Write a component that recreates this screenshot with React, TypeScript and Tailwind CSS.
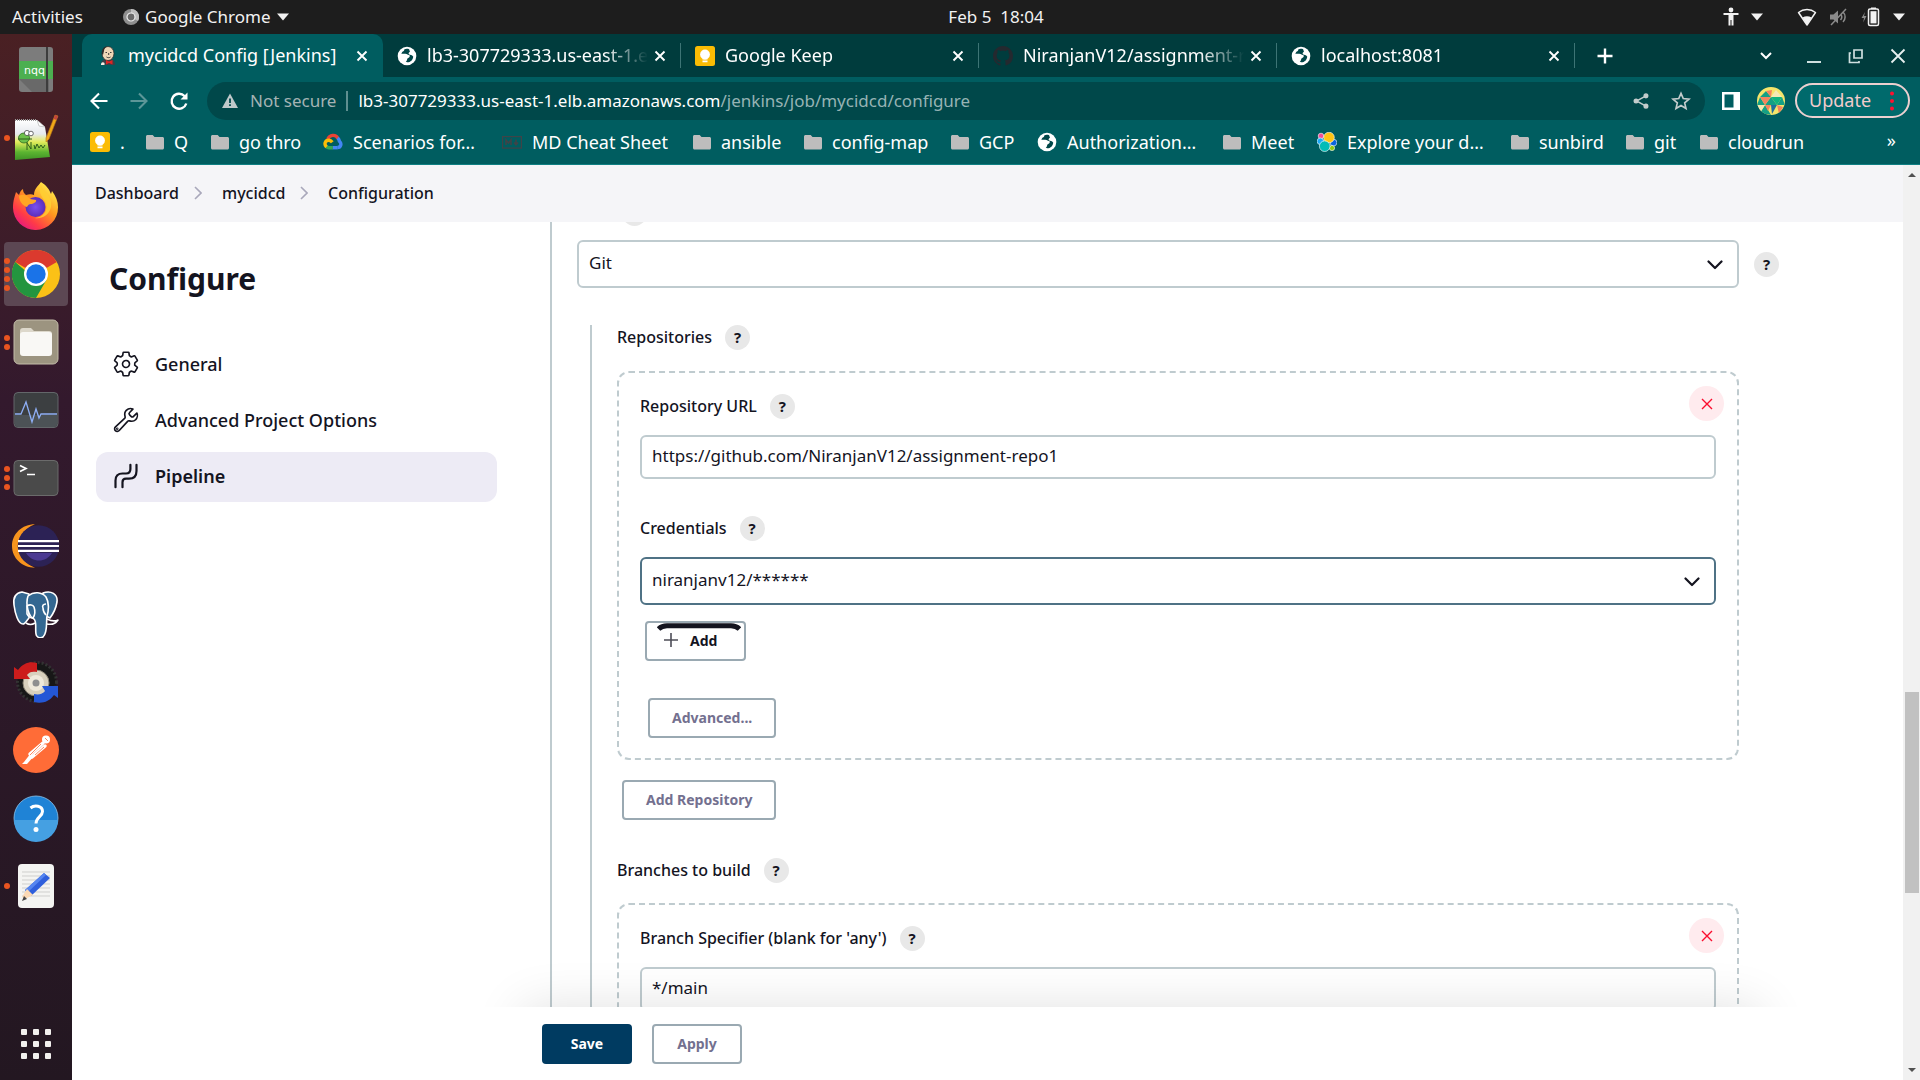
import type { ReactNode } from "react";

type P = { children?: ReactNode };

/* ---------- small browser icons ---------- */
const Globe = () => (
  <svg className="size-5 shrink-0" viewBox="0 0 20 20">
    <circle cx="10" cy="10" r="9.3" fill="#fff" />
    <path d="M12.2 3.2c-1.700-.6-3.600-.6-5 .2.200 1.100-.5 1.700-1.400 2.100-.9.400-.8 1.600-1.600 2.200l4.200.1c1.600.1 2 1 3.400 1.200 1.200.2 1.300 1.300.5 2.200-.9 1-2 .7-2.200 2.200-.1 1.200-.9 1.600-1.300 2.700 4 .9 7.300-2 7.400-5.700-.9-.5-1-1.500-2.200-1.500-1.400 0-2.500-.4-2.400-1.600.1-1 1.200-.9 1.300-1.800.1-.8-.8-1-.7-2.300z" fill="#004648" />
  </svg>
);
const Keep = () => (
  <svg className="size-5 shrink-0" viewBox="0 0 20 20">
    <rect width="20" height="20" rx="2.500" fill="#fbbc04" />
    <circle cx="10" cy="8.500" r="4.900" fill="#fff" />
    <path d="M7.500 11h5v2.600h-5zM7.500 14.600h5v1.700h-5z" fill="#fff" />
  </svg>
);
const Folder = () => (
  <svg className="h-5 w-[18px] shrink-0" viewBox="0 0 18 20">
    <path d="M1.500 3h5.200L8.500 5h8c.8 0 1.500.7 1.500 1.500v9.500c0 .8-.7 1.500-1.500 1.500h-15C.7 17.500 0 16.800 0 16V4.500C0 3.700.7 3 1.500 3z" fill="#bdbdbd" />
  </svg>
);
const Jenkins = () => (
  <svg className="size-5 shrink-0" viewBox="0 0 20 20">
    <path d="M3 19c0-4 2-5 4-6h6c3 1 4 3 4 6z" fill="#3c3f46" />
    <ellipse cx="10" cy="7.500" rx="6" ry="7" fill="#f0d6b7" stroke="#2b2b2b" strokeWidth=".8" />
    <path d="M4 8C3.500 3 6 .7 9 .6c-2 1.500-3 2.600-3 4.400L5 9z" fill="#2f2a28" />
    <path d="M7.500 6.500h1.500M12 6.500h1.500M8.500 11c1.500 1 3 .8 4 0M10.700 7v2" stroke="#2b2b2b" strokeWidth=".9" fill="none" />
    <path d="M8 14l3 1.500L14.500 14v4.500L11 17l-3 1.500z" fill="#e02424" />
    <path d="M3 17.500c1-1.500 2.500-1.500 3.500-.5V19H3z" fill="#f5efe6" />
  </svg>
);
const Github = () => (
  <svg className="size-5 shrink-0" viewBox="0 0 16 16">
    <path fill="#24292f" d="M8 0C3.580 0 0 3.580 0 8c0 3.540 2.290 6.530 5.470 7.590.4.070.55-.17.55-.38 0-.19-.01-.82-.01-1.490-2.010.37-2.530-.49-2.690-.94-.09-.23-.48-.94-.82-1.130-.28-.15-.68-.52-.01-.53.63-.01 1.080.58 1.230.82.72 1.210 1.870.87 2.330.66.07-.52.28-.87.51-1.070-1.780-.2-3.640-.89-3.640-3.950 0-.87.31-1.590.82-2.150-.08-.2-.36-1.020.08-2.120 0 0 .67-.21 2.200.82.64-.18 1.320-.27 2-.27s1.360.09 2 .27c1.530-1.040 2.200-.82 2.200-.82.44 1.100.16 1.920.08 2.120.51.56.82 1.270.82 2.150 0 3.070-1.870 3.750-3.650 3.950.29.25.54.73.54 1.480 0 1.070-.01 1.930-.01 2.200 0 .21.15.46.55.38A8.010 8.010 0 0 0 16 8c0-4.420-3.580-8-8-8z" />
  </svg>
);
const GCloud = () => (
  <svg className="size-5 shrink-0" viewBox="0 0 20 20" fill="none" strokeWidth="3.400">
    <path d="M4.800 7.200C6.500 2.500 12.800 2 15 6.500" stroke="#ea4335" />
    <path d="M14.600 6c1.500 1.200 1.600 2 1.800 3.200 2.600 2.200 1.600 6.300-2 6.300" stroke="#4285f4" />
    <path d="M14.600 15.700H9.500" stroke="#4285f4" />
    <path d="M9.800 15.700H6c-1.200 0-2-.4-2.800-1.200" stroke="#34a853" />
    <path d="M3.500 15C.5 12 2.500 8 6 8.200c1.500.1 2.500 1 3.300 2" stroke="#fbbc05" />
  </svg>
);
const Markdown = () => (
  <svg className="size-5 shrink-0" viewBox="0 0 20 20" fill="none" stroke="#3f4448" strokeWidth="1.200">
    <rect x=".6" y="4.600" width="18.800" height="11.500" />
    <path d="M4 13V8l2.500 3L9 8v5M14 7.500v5M12 10.500l2 2.300 2-2.300" strokeWidth="1.600" />
  </svg>
);
const Elastic = () => (
  <svg className="size-5 shrink-0" viewBox="0 0 20 20" stroke="#fff" strokeWidth=".6">
    <circle cx="4" cy="4" r="2.800" fill="#f04e98" />
    <circle cx="3.400" cy="9.300" r="3.300" fill="#1ba9f5" />
    <circle cx="16.500" cy="10.600" r="3.400" fill="#0b64dd" />
    <circle cx="15" cy="16" r="2.600" fill="#93c90e" />
    <circle cx="12" cy="5.500" r="5.300" fill="#fec514" />
    <circle cx="7.700" cy="14.200" r="5.300" fill="#02bcb7" />
  </svg>
);
const Cross = () => (
  <svg className="size-3" viewBox="0 0 12 12" stroke="currentColor" strokeWidth="1.900">
    <path d="M1.500 1.500l9 9M10.500 1.500l-9 9" />
  </svg>
);
const Caret = () => (
  <svg className="h-2 w-3 shrink-0" viewBox="0 0 12 8"><path d="M0 .5h12L6 7.500z" fill="#f2f2f2" /></svg>
);

/* ---------- desktop bar ---------- */
function TopBar() {
  return (
    <header className="grid h-[34px] shrink-0 grid-cols-[72px_1fr_auto_1fr] items-center bg-[#1d1d1d] text-[17px] text-[#f2f2f2]">
      <button className="justify-self-start pl-3 whitespace-nowrap">Activities</button>
      <button className="ml-[51px] flex items-center gap-1.5 justify-self-start">
        <svg className="size-4" viewBox="0 0 16 16">
          <circle cx="8" cy="8" r="8" fill="#8f8f8f" />
          <path d="M8 8V0a8 8 0 0 1 7 12z" fill="#bdbdbd" />
          <circle cx="8" cy="8" r="4" fill="#6a6a6a" stroke="#eee" strokeWidth="1.200" />
        </svg>
        Google Chrome
        <Caret />
      </button>
      <time className="whitespace-pre">Feb 5  18:04</time>
      <div className="flex items-center justify-end pr-[15px]">
        <svg className="size-5" viewBox="0 0 20 20" fill="#f2f2f2">
          <circle cx="10" cy="3" r="2.400" />
          <path d="M2.500 6h15v2h-5v10.500h-2V13h-1v5.500h-2V8h-5z" />
        </svg>
        <span className="ml-2.5 flex"><Caret /></span>
        <svg className="ml-[34px] size-5" viewBox="0 0 20 20">
          <path d="M1.500 5.500c5-4 12-4 17 0L10 18z" fill="none" stroke="#f2f2f2" strokeWidth="1.500" strokeLinejoin="round" />
          <path d="M5.500 10.500c2.800-1.800 6.200-1.800 9 0L10 18z" fill="#f2f2f2" />
        </svg>
        <svg className="ml-3 size-5" viewBox="0 0 20 20" fill="none" stroke="#8a8a8a" strokeWidth="1.500">
          <path d="M1 7.500h3.500L9 3.500v13l-4.500-4H1z" fill="#8a8a8a" stroke="none" />
          <path d="M11.500 7c1.500 1.700 1.500 4.300 0 6M14 5c2.800 2.800 2.800 7.200 0 10M2 18L17 2" />
        </svg>
        <svg className="ml-3 size-5" viewBox="0 0 20 20">
          <path d="M4 5L.5 11H3l-.8 4.500L5.500 9H3z" fill="#8a8a8a" />
          <path d="M10 .5h5V2h-5z" fill="#f2f2f2" />
          <rect x="7.500" y="2" width="10" height="16.500" rx="1.500" fill="none" stroke="#f2f2f2" strokeWidth="1.500" />
          <rect x="9.500" y="4.200" width="6" height="12.200" fill="#f2f2f2" />
        </svg>
        <span className="ml-3 flex"><Caret /></span>
      </div>
    </header>
  );
}

/* ---------- dock ---------- */
const dock: { name: string; dots: number; active?: boolean; icon: ReactNode }[] = [
  { name: "Notepadqq", dots: 0, icon: (
    <svg className="size-12" viewBox="0 0 48 48">
      <rect x="7" y="1" width="34" height="45" rx="3" fill="#7c7c7c" />
      <path d="M7 33h30v13H20z" fill="#696969" />
      <rect x="7" y="15" width="34" height="18" fill="#4caf50" />
      <rect x="34" y="1" width="2" height="45" fill="#3d3d3d" />
      <text x="12" y="28" fontSize="11" fill="#fff" fontFamily="DejaVu Sans">nqq</text>
    </svg>) },
  { name: "Notepad++", dots: 1, icon: (
    <svg className="size-12" viewBox="0 0 48 48">
      <defs><linearGradient id="npp" x2="0" y2="1"><stop offset="0" stopColor="#fff" /><stop offset=".35" stopColor="#e6e9ee" /><stop offset=".55" stopColor="#e3ec5a" /><stop offset=".8" stopColor="#5cb531" /><stop offset="1" stopColor="#3f9326" /></linearGradient></defs>
      <path d="M3 6h22l8 7 5 30-35 3z" fill="url(#npp)" />
      <path d="M3 6h22" stroke="#999" strokeWidth="2" strokeDasharray="1 1" />
      <path d="M25 6l2 6 6 1z" fill="#fff" stroke="#aaa" strokeWidth=".6" />
      <ellipse cx="12" cy="24" rx="5.500" ry="5" fill="#6cc04a" stroke="#2d6b1d" strokeWidth=".8" />
      <circle cx="15" cy="19" r="2.600" fill="#fff" stroke="#333" strokeWidth=".7" /><circle cx="19" cy="19.500" r="2.300" fill="#fff" stroke="#333" strokeWidth=".7" />
      <path d="M6 25h14M15 28v8m0-7l4 6v-7m3 3l1 4 2-5 2 4 2-3 2 3 2-3" stroke="#2b5c1b" strokeWidth="1" fill="none" />
      <path d="M43 1l3 1-9 23-3 3v-4z" fill="#f0a818" stroke="#b5721a" strokeWidth=".6" /><path d="M43 1l3 1-1.500 4-3-1z" fill="#c1443c" />
    </svg>) },
  { name: "Firefox", dots: 0, icon: (
    <svg className="size-12" viewBox="0 0 48 48">
      <defs><linearGradient id="ff" x1=".9" y1=".1" x2=".2" y2="1"><stop offset="0" stopColor="#fff04d" /><stop offset=".4" stopColor="#ff9a1f" /><stop offset=".75" stopColor="#ff3b47" /><stop offset="1" stopColor="#e31587" /></linearGradient><radialGradient id="ffb"><stop offset="0" stopColor="#7a4ff0" /><stop offset="1" stopColor="#5b2fb8" /></radialGradient></defs>
      <path d="M29 0c6 4 8 7 10 12l1-3c4 5 6 11 6 16a22.500 22.500 0 0 1-45 1C1 18 3 14 4 10l3 3c1-3 2-5 4-6 0 3 1 4 3 6 3-1 6-1 8 0C22 7 26 4 29 0z" fill="url(#ff)" />
      <circle cx="23.500" cy="25" r="10" fill="url(#ffb)" />
      <path d="M7 14c4-3 9 0 11 3l6 1c1 2-3 4-5 4s-3 1-4 3c-4-1-8-6-8-11z" fill="#ffa623" />
      <path d="M29 2c0 8 12 10 10 23-2 9-10 12-16 11 8-1 13-7 11-14-2-6-9-10-5-20z" fill="#ffcf33" opacity=".85" />
    </svg>) },
  { name: "Google Chrome", dots: 4, active: true, icon: (
    <svg className="size-12" viewBox="0 0 48 48">
      <circle cx="24" cy="24" r="24" fill="#fbc116" />
      <path d="M24 24L3.200 12A24 24 0 0 1 44.800 12z" fill="#db3a2e" />
      <path d="M3.200 12A24 24 0 0 0 24 48l10.400-18H24z" fill="#23953f" />
      <circle cx="24" cy="24" r="12" fill="#fff" />
      <circle cx="24" cy="24" r="9.700" fill="#1a73e8" />
    </svg>) },
  { name: "Files", dots: 2, icon: (
    <svg className="size-12" viewBox="0 0 48 48">
      <rect x="2" y="2" width="44" height="44" rx="5" fill="#9c9480" stroke="#c3bca9" />
      <path d="M8 13c0-2 1-3 3-3h8l3 3h15c2 0 3 1 3 3v5H8z" fill="#ddd8cb" />
      <rect x="8" y="14" width="32" height="24" rx="3" fill="#f9f8f5" />
    </svg>) },
  { name: "System Monitor", dots: 0, icon: (
    <svg className="size-12" viewBox="0 0 48 48">
      <rect x="2" y="6.500" width="44" height="35" rx="4" fill="#3c3f41" stroke="#63676a" />
      <path d="M3 29h42v9c0 2-1 3-3 3H6c-2 0-3-1-3-3z" fill="#4c5256" />
      <path d="M3 28h6l5-12 6 20 4-13 3 9 2-4h16" stroke="#8eaef5" strokeWidth="1.300" fill="none" />
    </svg>) },
  { name: "Terminal", dots: 3, icon: (
    <svg className="size-12" viewBox="0 0 48 48">
      <rect x="2" y="6.500" width="44" height="35" rx="4" fill="#4a4a4a" stroke="#6b6b6b" />
      <path d="M8 11.500l6 3-6 3M15 20.500h8" stroke="#fff" strokeWidth="1.700" fill="none" />
    </svg>) },
  { name: "Eclipse", dots: 0, icon: (
    <svg className="size-12" viewBox="0 0 48 48">
      <path d="M23 2.300C10 2.300 0 12 0 24s10 21.700 23 21.700C13 42 8 34 8 24S13 6 23 2.300z" fill="#f7941e" />
      <circle cx="26.500" cy="24" r="20.800" fill="#2c2255" />
      <path d="M14 31h26c-3 5-8 7.500-13 7.500S17 36 14 31z" fill="#4b3a92" />
      <path d="M6 19.200h41M6 24h41M6 28.800h41" stroke="#fff" strokeWidth="2.200" />
    </svg>) },
  { name: "pgAdmin", dots: 0, icon: (
    <svg className="size-12" viewBox="0 0 48 48" fill="#336791" stroke="#fff" strokeWidth="1.600" strokeLinejoin="round">
      <path d="M10 2C3 3 1 8 2 15c1 8 4 19 9 19 2 0 4-4 6-6V4z" />
      <path d="M31 3c8-3 15 1 14 9-1 6-4 12-7 16l-6-3z" />
      <path d="M16 6c6-5 14-4 18 1 3 5 3 13 1 19-1 5 1 17-4 21-3 2-7 0-7-3-1-6 1-12-2-15-5-2-9-14-6-23z" />
      <path d="M15 16c3-2 6-1 7 1 1 3 1 8-1 11-3 0-5-2-6-4zM34 14c-3 0-4 2-3 4 0 3 1 5 3 7M35 29c4 2 7 3 11 1-2 3-6 5-11 4M14 33c3 2 6 2 9 0" fill="none" />
    </svg>) },
  { name: "Disk Sync", dots: 0, icon: (
    <svg className="size-12" viewBox="0 0 48 48">
      <circle cx="25" cy="24" r="19.500" fill="#171717" stroke="#333" strokeDasharray="2 2" strokeWidth="3" />
      <circle cx="24" cy="25" r="13" fill="#d8d0bd" stroke="#8a8475" />
      <circle cx="24" cy="25" r="8" fill="#efe9db" /><circle cx="24" cy="25" r="3.500" fill="#8f8f8f" />
      <path d="M2 9l4 3c5-7 12-9 19-7v9c-5-1-8 0-10 3l3 4H2z" fill="#cc1c1c" />
      <path d="M46 40l-4-3c-5 7-12 9-20 7v-8c5 1 9 0 11-3l-3-5h16z" fill="#2457d6" />
    </svg>) },
  { name: "Postman", dots: 0, icon: (
    <svg className="size-12" viewBox="0 0 48 48">
      <circle cx="24" cy="24" r="23" fill="#ff6c37" />
      <circle cx="34" cy="13.500" r="4" fill="#fff" />
      <path d="M31 17l-13 11M33 20L20 31" stroke="#fff" strokeWidth="3.500" strokeLinecap="round" />
      <path d="M19 27l-7 9-2 2h5l7-8z" fill="#fff" /><path d="M29 18L18 29M32 21l-9 8M33 12l3 3" stroke="#ff6c37" strokeWidth=".8" />
    </svg>) },
  { name: "Help", dots: 0, icon: (
    <svg className="size-12" viewBox="0 0 48 48">
      <circle cx="24" cy="24" r="22" fill="#1f83d6" stroke="#8cc4ee" strokeWidth=".8" />
      <path d="M2 26h44a22 22 0 0 1-44 0z" fill="#45a0e2" />
      <path d="M18.500 14c4-3.500 12-2.500 12 3.500 0 5-6.500 5.500-6.500 12" stroke="#fff" strokeWidth="3" fill="none" /><circle cx="24" cy="35.500" r="2.500" fill="#fff" />
    </svg>) },
  { name: "Text Editor", dots: 1, icon: (
    <svg className="size-12" viewBox="0 0 48 48">
      <rect x="6" y="2" width="36" height="44" rx="4" fill="#f4f4f2" />
      <path d="M10 10h28M10 14h28M10 18h28M10 22h28M10 26h28M10 30h28M10 34h28" stroke="#cfcfcd" />
      <path d="M32 11l6 5-19 18-6-6z" fill="#2f5fdc" /><path d="M32 11l2 2-19 18-2-3z" fill="#5585f0" />
      <path d="M15 27l6 6-8 4-3-2z" fill="#fbd9b5" /><path d="M12 34l-2 5 5-2z" fill="#444" />
    </svg>) },
];

function Dock() {
  return (
    <nav className="flex w-[72px] shrink-0 flex-col items-center gap-1 bg-linear-to-b from-[#4a2023] via-[#33192d] via-35% to-[#231721] py-1">
      {dock.map((d) => (
        <button key={d.name} aria-label={d.name} className={`relative flex size-16 shrink-0 items-center justify-center rounded ${d.active ? "bg-[#5c4753]" : ""}`}>
          {d.icon}
          <span className="absolute inset-y-0 left-0 flex flex-col justify-center gap-[3px]">
            {Array.from({ length: d.dots }, (_, i) => <i key={i} className="size-1.5 rounded-full bg-[#e95420]" />)}
          </span>
        </button>
      ))}
      <button aria-label="Show Applications" className="mt-auto grid size-16 grid-cols-[6px_6px_6px] place-content-center gap-1.5">
        {Array.from({ length: 9 }, (_, i) => <i key={i} className="size-1.5 rounded-[1px] bg-[#f2f0ee]" />)}
      </button>
    </nav>
  );
}

/* ---------- browser chrome ---------- */
const tabs = [
  { icon: <Globe />, title: "lb3-307729333.us-east-1.elb" },
  { icon: <Keep />, title: "Google Keep" },
  { icon: <Github />, title: "NiranjanV12/assignment-repo1" },
  { icon: <Globe />, title: "localhost:8081" },
];

function TabStrip() {
  return (
    <div className="flex h-[43px] shrink-0 items-stretch bg-[#003c3d] pl-2.5 text-[18px] text-white">
      <div className="flex w-[301px] items-center gap-2.5 rounded-t-[10px] bg-[#005d60] pl-4">
        <Jenkins />
        <span className="flex-1 overflow-hidden whitespace-nowrap">mycidcd Config [Jenkins]</span>
        <button aria-label="Close tab" className="mr-[15px]"><Cross /></button>
      </div>
      {tabs.map((t) => (
        <div key={t.title} className="flex w-[298px] items-center">
          <div className="flex min-w-0 flex-1 items-center gap-2.5 pl-3.5">
            {t.icon}
            <span className="min-w-0 flex-1 overflow-hidden mask-r-from-80% mask-r-to-100% whitespace-nowrap">{t.title}</span>
          </div>
          <button aria-label="Close tab" className="mr-3.5 ml-1.5"><Cross /></button>
          <i className="h-[25px] w-px bg-[#3d7475]" />
        </div>
      ))}
      <button aria-label="New tab" className="ml-[22px]">
        <svg className="size-4" viewBox="0 0 16 16" stroke="#fff" strokeWidth="2.400"><path d="M8 .5v15M.5 8h15" /></svg>
      </button>
      <div className="ml-auto flex items-center gap-[30px] pr-3.5">
        <button aria-label="Search tabs" className="mr-1"><svg className="h-2 w-3" viewBox="0 0 12 8" fill="none" stroke="#fff" strokeWidth="2"><path d="M1 1l5 5 5-5" /></svg></button>
        <button aria-label="Minimise" className="pt-3"><svg className="h-1 w-4" viewBox="0 0 16 4"><path d="M1 1h14v2H1z" fill="#cfe0e0" /></svg></button>
        <button aria-label="Restore" className="-ml-1"><svg className="size-4" viewBox="0 0 16 16" fill="none" stroke="#cfe0e0" strokeWidth="1.700"><path d="M6 2h8v8H6zM3 5H1.500v9.500H11V13" /></svg></button>
        <button aria-label="Close window" className="-ml-1"><svg className="size-4" viewBox="0 0 16 16" stroke="#e6f0f0" strokeWidth="1.800"><path d="M1.500 1.500l13 13M14.500 1.500l-13 13" /></svg></button>
      </div>
    </div>
  );
}

function Toolbar() {
  return (
    <div className="flex h-[47px] shrink-0 items-center bg-[#005d60] pl-[17px] text-[17px]">
      <button aria-label="Back"><svg className="size-5" viewBox="0 0 20 20" fill="none" stroke="#fff" strokeWidth="2.100"><path d="M18.500 10H3M10 2.500L2.500 10l7.500 7.500" /></svg></button>
      <button aria-label="Forward" className="ml-5"><svg className="size-5" viewBox="0 0 20 20" fill="none" stroke="#5c9698" strokeWidth="2.100"><path d="M1.500 10H17M10 2.500l7.500 7.500-7.500 7.500" /></svg></button>
      <button aria-label="Reload" className="ml-5"><svg className="size-5" viewBox="0 0 20 20" fill="none" stroke="#fff" strokeWidth="2.400"><path d="M17.300 12.500A7.500 7.500 0 1 1 15.500 5l1.500 1.500" /><path d="M18.500 1.500v7h-7z" fill="#fff" stroke="none" /></svg></button>
      <div className="ml-[18px] flex h-[38px] flex-1 items-center rounded-full bg-[#00484a] pr-3.5 pl-3.5">
        <svg className="size-[18px]" viewBox="0 0 18 18"><path d="M9 1.500l8 14.500H1z" fill="#bfc9ca" /><path d="M8.100 6.500h1.800v4.500H8.100zM8.100 12.300h1.800V14H8.100z" fill="#00484a" /></svg>
        <span className="ml-[11px] text-[#a5b3b4]">Not secure</span>
        <i className="mx-2.5 h-5 w-0.5 bg-[#5f8f90]" />
        <span className="text-[#96b3b4]"><span className="text-white">lb3-307729333.us-east-1.elb.amazonaws.com</span>/jenkins/job/mycidcd/configure</span>
        <button aria-label="Share" className="ml-auto"><svg className="size-[18px]" viewBox="0 0 20 20" fill="#c3cccc" stroke="#c3cccc" strokeWidth="1.600"><path d="M15 4.500L5 10l10 5.500" fill="none" /><circle cx="15.500" cy="4.300" r="2" /><circle cx="4.500" cy="10" r="2" /><circle cx="15.500" cy="15.700" r="2" /></svg></button>
        <button aria-label="Bookmark" className="ml-[21px]"><svg className="size-5" viewBox="0 0 24 24" fill="none" stroke="#c3cccc" strokeWidth="2"><path d="M12 2.800l2.700 6.300 6.900.6-5.200 4.500 1.600 6.700-6-3.600-6 3.600 1.600-6.700L2.400 9.700l6.900-.6z" /></svg></button>
      </div>
      <button aria-label="Side panel" className="ml-[17px]"><svg className="h-[18px] w-[18px]" viewBox="0 0 18 18"><path d="M0 0h18v18H0zM2.500 2.500v13h9v-13z" fill="#fff" fillRule="evenodd" /></svg></button>
      <button aria-label="Profile" className="ml-[17px] overflow-hidden rounded-full">
        <svg className="size-7" viewBox="0 0 28 28">
          <path d="M0 0h28v28H0z" fill="#f5e56b" />
          <path d="M3 10l6-6 5 6zM14 10l6 8H8zM0 18l3-8 5 8zM20 18l5-8 3 8zM14 28l-6-10-5 8z" fill="#14a085" />
          <path d="M9 4l6-1-1 7zM3 10h11l-6 8zM8 18h6l-3 6zM20 18l6 2-4 7z" fill="#f4845f" />
          <path d="M14 10l11 0-5 8z" fill="#0fb37f" />
          <path d="M14 18h6l-5 9z" fill="#1f6f9c" />
          <path d="M14 10l5-7 6 7zM0 18h8l-5 8z" fill="#f3e9b4" />
        </svg>
      </button>
      <button className="mr-2.5 ml-2.5 flex h-[35px] w-[115px] items-center justify-between rounded-full border-2 border-[#ecd0d0] bg-[#006a6c] pr-3.5 pl-3 text-[18px] text-[#f3cccc]">
        Update
        <svg className="h-5 w-1" viewBox="0 0 4 20" fill="#ff1030"><circle cx="2" cy="2.500" r="2" /><circle cx="2" cy="10" r="2" /><circle cx="2" cy="17.500" r="2" /></svg>
      </button>
    </div>
  );
}

const bookmarks = [
  { icon: <Keep />, label: ".", w: "w-[56px]" },
  { icon: <Folder />, label: "Q", w: "w-[65px]" },
  { icon: <Folder />, label: "go thro", w: "w-[112px]" },
  { icon: <GCloud />, label: "Scenarios for…", w: "w-[179px]" },
  { icon: <Markdown />, label: "MD Cheat Sheet", w: "w-[191px]" },
  { icon: <Folder />, label: "ansible", w: "w-[111px]" },
  { icon: <Folder />, label: "config-map", w: "w-[147px]" },
  { icon: <Folder />, label: "GCP", w: "w-[86px]" },
  { icon: <Globe />, label: "Authorization…", w: "w-[186px]" },
  { icon: <Folder />, label: "Meet", w: "w-[94px]" },
  { icon: <Elastic />, label: "Explore your d…", w: "w-[194px]" },
  { icon: <Folder />, label: "sunbird", w: "w-[115px]" },
  { icon: <Folder />, label: "git", w: "w-[74px]" },
  { icon: <Folder />, label: "cloudrun", w: "w-[110px]" },
];

function Bookmarks() {
  return (
    <div className="flex h-[41px] shrink-0 items-center border-b border-[#0f8083] bg-[#005d60] pb-1 pl-[18px] text-[18px] text-white">
      {bookmarks.map((b) => (
        <a key={b.label} href="#" className={`flex items-center gap-2.5 whitespace-nowrap ${b.w}`}>
          {b.icon}
          {b.label}
        </a>
      ))}
      <button aria-label="More bookmarks" className="mr-6 ml-auto pb-1">»</button>
    </div>
  );
}

/* ---------- Jenkins page ---------- */
const CrumbArrow = () => (
  <svg className="h-3.5 w-2" viewBox="0 0 8 14" fill="none" stroke="#a9a8bb" strokeWidth="1.600"><path d="M1 1l6 6-6 6" /></svg>
);
const Help = () => (
  <button aria-label="Help" className="flex size-[25px] shrink-0 items-center justify-center rounded-full bg-[#e8e8e8] text-[15px] font-bold">?</button>
);
function Label({ children, id }: { children: ReactNode; id?: string }) {
  return (
    <div className="flex h-[25px] items-center gap-[13px]">
      <label htmlFor={id} className="pb-0.5 text-[16px] font-medium">{children}</label>
      <Help />
    </div>
  );
}
function Select({ id, value, label, focused }: { id: string; value: string; label?: string; focused?: boolean }) {
  return (
    <div className="relative flex-1">
      <select id={id} aria-label={label} className={`h-12 w-full appearance-none rounded-md border-2 bg-white px-2.5 pb-0.5 text-[17px] ${focused ? "border-[#4f7285]" : "border-[#bfcbcf]"}`}>
        <option>{value}</option>
      </select>
      <svg className="pointer-events-none absolute top-5 right-4 h-[10px] w-4" viewBox="0 0 16 10" fill="none" stroke="#14141f" strokeWidth="2.200" strokeLinecap="round" strokeLinejoin="round"><path d="M1.500 1.500L8 8l6.500-6.500" /></svg>
    </div>
  );
}
const Input = ({ id, value }: { id: string; value: string }) => (
  <input id={id} defaultValue={value} className="h-11 w-full rounded-md border-2 border-[#bfcbcf] bg-white px-2.5 pb-1 text-[17px]" />
);
const Button = ({ children }: P) => (
  <button className="block h-10 rounded border-2 border-[#9aa9b2] px-[22px] pb-0.5 text-[14px] font-bold text-[#73708f]">{children}</button>
);
function Repeatable({ children }: P) {
  return (
    <div className="relative rounded-[12px] border-2 border-dashed border-[#bfcbcf] px-[21px] pt-[21px] pb-5">
      <button aria-label="Delete" className="absolute top-[13px] right-[13px] flex size-[35px] items-center justify-center rounded-full bg-[#ffebee] text-[#fb0d2e]">
        <svg className="size-3" viewBox="0 0 12 12" stroke="currentColor" strokeWidth="1.400"><path d="M1 1l10 10M11 1L1 11" /></svg>
      </button>
      {children}
    </div>
  );
}

const side = [
  { label: "General", icon: (
    <svg className="size-7" viewBox="0 0 512 512" fill="none" stroke="currentColor" strokeWidth="30" strokeLinecap="round" strokeLinejoin="round"><path d="M262.290 192.310a64 64 0 1 0 57.400 57.400 64.130 64.130 0 0 0-57.400-57.400zM416.390 256a154.340 154.340 0 0 1-1.530 20.790l45.210 35.460a10.810 10.810 0 0 1 2.450 13.750l-42.770 74a10.810 10.810 0 0 1-13.140 4.590l-44.900-18.080a16.110 16.110 0 0 0-15.170 1.750A164.480 164.480 0 0 1 325 400.800a15.940 15.940 0 0 0-8.820 12.140l-6.730 47.890a11.080 11.080 0 0 1-10.680 9.170h-85.540a11.110 11.110 0 0 1-10.690-8.870l-6.720-47.820a16.070 16.070 0 0 0-9-12.220 155.300 155.300 0 0 1-21.460-12.570 16 16 0 0 0-15.110-1.710l-44.890 18.070a10.810 10.810 0 0 1-13.140-4.580l-42.770-74a10.800 10.800 0 0 1 2.450-13.750l38.210-30a16.050 16.050 0 0 0 6-14.080c-.36-4.170-.58-8.330-.58-12.500s.21-8.270.58-12.350a16 16 0 0 0-6.070-13.940l-38.190-30A10.810 10.810 0 0 1 49.480 186l42.770-74a10.810 10.810 0 0 1 13.140-4.590l44.900 18.080a16.110 16.110 0 0 0 15.170-1.750A164.480 164.480 0 0 1 187 111.200a15.940 15.940 0 0 0 8.820-12.140l6.730-47.890A11.080 11.080 0 0 1 213.230 42h85.540a11.110 11.110 0 0 1 10.690 8.870l6.720 47.820a16.070 16.070 0 0 0 9 12.220 155.300 155.300 0 0 1 21.460 12.570 16 16 0 0 0 15.110 1.710l44.890-18.070a10.810 10.810 0 0 1 13.140 4.580l42.770 74a10.800 10.800 0 0 1-2.450 13.750l-38.210 30a16.050 16.050 0 0 0-6.050 14.080c.33 4.140.55 8.300.55 12.470z" /></svg>) },
  { label: "Advanced Project Options", icon: (
    <svg className="size-7" viewBox="0 0 512 512" fill="none" stroke="currentColor" strokeWidth="30" strokeLinecap="round" strokeLinejoin="round"><path d="M393.870 190a32.100 32.100 0 0 1-45.250 0l-26.570-26.570a32.090 32.090 0 0 1 0-45.260L382.190 58a1 1 0 0 0-.3-1.640c-38.820-16.640-89.150-8.160-121.110 23.570-30.580 30.350-32.320 76-21.120 115.840a31.930 31.930 0 0 1-9.060 32.080L64 380a48.170 48.170 0 1 0 68 68l153.860-167a31.930 31.930 0 0 1 31.600-9.130c39.540 10.590 84.540 8.600 114.720-21.190 32.490-32 39.500-88.560 23.750-120.930a1 1 0 0 0-1.600-.26z" /><circle cx="96" cy="416" r="8" /></svg>) },
  { label: "Pipeline", icon: (
    <svg className="size-7" viewBox="0 0 28 28" fill="none" stroke="currentColor" strokeWidth="2.200" strokeLinecap="round"><path d="M18.400 2.800V7c0 3-1.400 4.500-4.400 4.500h-3.500c-4.500 0-7 2.500-7 7V25.200M24.500 2.800V9c0 5-2.500 7.700-7.500 7.700h-3c-2.300 0-3.500 1.200-3.500 3.500v5" /></svg>) },
];

export default function App() {
  return (
    <div className="flex h-screen flex-col overflow-hidden bg-white font-['Noto_Sans',sans-serif] text-[#14141f]">
      <TopBar />
      <div className="flex min-h-0 flex-1">
        <Dock />
        <div className="flex min-w-0 flex-1 flex-col">
          <TabStrip />
          <Toolbar />
          <Bookmarks />
          <div className="flex min-h-0 flex-1">
            <div className="flex min-w-0 flex-1 flex-col">
              <nav aria-label="Breadcrumb" className="flex h-[57px] shrink-0 items-center bg-[#f5f5f8] pb-0.5 pl-[23px] text-[16px] font-medium">
                <a href="#" className="w-[99px]">Dashboard</a>
                <CrumbArrow />
                <a href="#" className="ml-5 w-[78px]">mycidcd</a>
                <CrumbArrow />
                <a href="#" className="ml-5">Configuration</a>
              </nav>
              <main className="flex min-h-0 flex-1 overflow-hidden">
                <aside className="w-[450px] shrink-0 pt-[37px] pr-[25px] pl-6">
                  <h1 className="pl-[13px] text-[30px] leading-[40px] font-bold">Configure</h1>
                  <div className="mt-[41px] flex flex-col gap-1.5">
                    {side.map((s) => (
                      <a key={s.label} href="#" className={`flex h-[50px] items-center gap-[15px] rounded-xl pb-0.5 pl-4 text-[18px] ${s.label === "Pipeline" ? "bg-[#edebf5] font-semibold" : "font-medium"}`}>
                        {s.icon}
                        {s.label}
                      </a>
                    ))}
                  </div>
                </aside>
                <section className="flex min-w-0 flex-1 flex-col">
                  <div className="min-h-0 flex-1 overflow-hidden pl-7">
                    <div className="border-l-2 border-[#bfcbcf] pr-[124px] pl-[25px]">
                      <div className="-mt-[22px] pt-px pl-[45px]">
                        <Help />
                      </div>
                      <div className="mt-3.5 flex items-center gap-[15px]">
                        <Select id="scm" label="SCM" value="Git" />
                        <Help />
                      </div>
                      <div className="mt-[37px] mr-10 ml-[13px] border-l-2 border-[#bfcbcf] pl-[25px]">
                        <Label>Repositories</Label>
                        <div className="mt-[21px]">
                          <Repeatable>
                            <Label id="url">Repository URL</Label>
                            <div className="mt-4"><Input id="url" value="https://github.com/NiranjanV12/assignment-repo1" /></div>
                            <div className="mt-[37px]"><Label id="cred">Credentials</Label></div>
                            <div className="mt-4 flex"><Select id="cred" value="niranjanv12/******" focused /></div>
                            <button className="relative mt-4 ml-[5px] flex h-10 w-[101px] items-center gap-[11px] rounded border-2 border-[#9aa9b2] pb-0.5 pl-4 text-[14px] font-bold">
                              <svg className="absolute top-0 left-2.5 h-2 w-[84px]" viewBox="0 0 84 8" fill="none" stroke="#14141f"><path d="M1.500 6C4 3.500 7 2.700 10 2.700h64c3 0 6 .8 8.500 3.300" strokeWidth="5" /></svg>
                              <svg className="size-4" viewBox="0 0 16 16" stroke="#4d4d57" strokeWidth="1.600"><path d="M8 1v14M1 8h14" /></svg>
                              Add
                            </button>
                            <div className="mt-[37px] ml-2"><Button>Advanced...</Button></div>
                          </Repeatable>
                        </div>
                        <div className="mt-5 ml-[5px]"><Button>Add Repository</Button></div>
                        <div className="mt-[38px]"><Label>Branches to build</Label></div>
                        <div className="mt-5">
                          <Repeatable>
                            <Label id="branch">Branch Specifier (blank for 'any')</Label>
                            <div className="mt-4"><Input id="branch" value="*/main" /></div>
                          </Repeatable>
                        </div>
                      </div>
                    </div>
                  </div>
                  <footer className="relative mr-[143px] flex h-[73px] shrink-0 gap-5 bg-white px-5 pt-[17px] shadow-[0_0_50px_rgba(0,0,0,0.12)]">
                    <div className="absolute inset-y-0 -right-[143px] -left-16 bg-white" />
                    <button className="relative h-10 w-[90px] rounded bg-[#003b61] pb-0.5 text-[14px] font-bold text-white">Save</button>
                    <button className="relative h-10 w-[90px] rounded border-2 border-[#9aa9b2] pb-0.5 text-[14px] font-bold text-[#73708f]">Apply</button>
                  </footer>
                </section>
              </main>
            </div>
            <div aria-hidden="true" className="flex w-[17px] shrink-0 flex-col items-center bg-[#f1f1f1] py-2">
              <svg className="h-1 w-2" viewBox="0 0 8 4"><path d="M4 0l4 4H0z" fill="#505050" /></svg>
              <div className="flex w-full flex-1 flex-col items-center">
                <i className="grow-[515]" />
                <i className="w-3.5 grow-[201] bg-[#c1c1c1]" />
                <i className="grow-[175]" />
              </div>
              <svg className="h-1 w-2" viewBox="0 0 8 4"><path d="M0 0h8L4 4z" fill="#505050" /></svg>
            </div>
          </div>
        </div>
      </div>
    </div>
  );
}
